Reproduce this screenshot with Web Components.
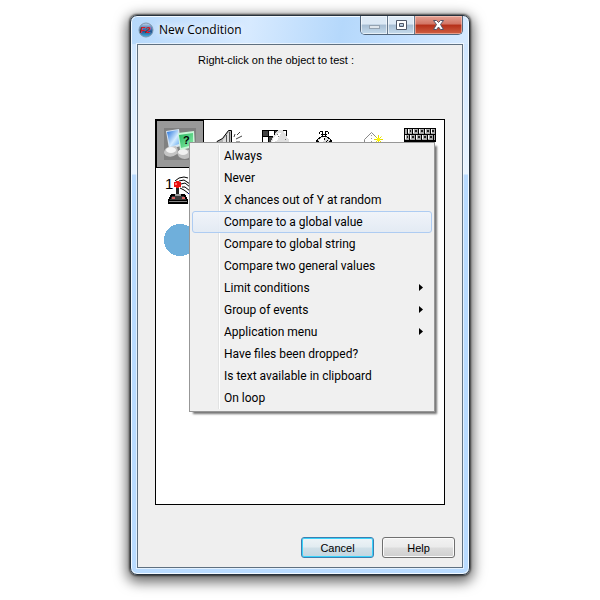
<!DOCTYPE html>
<html lang="en">
<head>
<meta charset="utf-8">
<title>New Condition</title>
<style>
    body {
        box-sizing: border-box;
        min-height: 100vh;
        margin: 0;
        padding: 15px;
        background: #fff;
        color: #000;
        font: 11px/16px "Liberation Sans", Arial, sans-serif;
    }
</style>
</head>
<body>
<win-dialog heading="New Condition">
    <p slot="hint">Right-click on the object to test :</p>
    <object-list>
        <object-cell icon="system" label="Special conditions" selected></object-cell>
        <object-cell icon="speaker" label="Sound"></object-cell>
        <object-cell icon="board" label="Storyboard controls"></object-cell>
        <object-cell icon="timer" label="Timer"></object-cell>
        <object-cell icon="create" label="Create objects"></object-cell>
        <object-cell icon="keyboard" label="Mouse and keyboard"></object-cell>
        <object-cell icon="joystick" label="Player 1"></object-cell>
        <object-cell></object-cell>
        <object-cell></object-cell>
        <object-cell></object-cell>
        <object-cell></object-cell>
        <object-cell></object-cell>
        <object-cell icon="circle" label="Active"></object-cell>
        <context-menu slot="menu">
            <menu-entry>Always</menu-entry>
            <menu-entry>Never</menu-entry>
            <menu-entry>X chances out of Y at random</menu-entry>
            <menu-entry active>Compare to a global value</menu-entry>
            <menu-entry>Compare to global string</menu-entry>
            <menu-entry>Compare two general values</menu-entry>
            <menu-entry submenu>Limit conditions</menu-entry>
            <menu-entry submenu>Group of events</menu-entry>
            <menu-entry submenu>Application menu</menu-entry>
            <menu-entry>Have files been dropped?</menu-entry>
            <menu-entry>Is text available in clipboard</menu-entry>
            <menu-entry>On loop</menu-entry>
        </context-menu>
    </object-list>
    <push-button slot="actions" primary>Cancel</push-button>
    <push-button slot="actions">Help</push-button>
</win-dialog>

<script>
const icons = {
    system: `
        <defs>
            <linearGradient id="blue" x2="1" y2="1"><stop offset="0" stop-color="#1f6fdc"/><stop offset=".6" stop-color="#d5ecff"/><stop offset="1" stop-color="#5fa8ee"/></linearGradient>
            <linearGradient id="green" x2="1" y2="1"><stop offset="0" stop-color="#23b45c"/><stop offset="1" stop-color="#8ff0ac"/></linearGradient>
        </defs>
        <rect width="32" height="32" fill="#808080"/>
        <path d="M2 3 15 1 17 18 5 21Z" fill="#d6e4f2"/>
        <path d="M3 4 14 2 15 16 6 19Z" fill="url(#blue)"/>
        <path d="M0 24Q1 19 6 19L12 18Q15 22 13 26 8 30 3 28 0 27 0 24Z" fill="#c4c4c4"/>
        <ellipse cx="7" cy="22" rx="5" ry="3" fill="#f4f4f4"/>
        <path d="M13 25Q15 21 20 21L26 22Q28 26 26 29 21 33 15 29Z" fill="#c0c0c0"/>
        <ellipse cx="19" cy="24" rx="5" ry="3" fill="#f0f0f0"/>
        <path d="M14 5 30 3 31 19 16 22Z" fill="#c9f7d8"/>
        <path d="M15 7 29 5 29 17 17 20Z" fill="url(#green)"/>
        <text x="19" y="16" font-family="Liberation Sans" font-size="11" font-weight="700">?</text>`,
    speaker: `
        <path d="M5 13.500 10.500 10.500 16.500 2.500H19.500V28.500H16.500L10.500 21.500 5 20.500Z" fill="#b4b4b4" stroke="#000"/>
        <path d="M11 12 17 4V26L11 20Z" fill="#dedede"/>
        <path d="M14.500 7V24M17.500 4V27" stroke="#555"/>
        <path d="M22 9 23 6M25 7 28 4M24 11 30 8M24 14H28" stroke="#444" fill="none"/>`,
    board: `
        <g shape-rendering="crispEdges">
            <rect x="2" y="2" width="25" height="27" fill="#000"/>
            <path d="M9 3h5v5H9zM20 3h6v5H20zM3 9h5v5H3zM15 9h5v5h-5zM9 15h5v5H9zM20 15h6v5h-6zM3 21h5v5H3z" fill="#fff"/>
            <path d="M3 3h5v5H3zM15 3h4v5h-4zM9 9h5v5H9z" fill="#444"/>
            <path d="M10 16 13 9 18 2H23L29 12 26 27H14Z" fill="#e0e0e0"/>
            <path d="M12 14 14 9 18 5H21L17 13Z" fill="#fff"/>
            <path d="M17 6h1v1h-1zM18 8h1v1h-1zM25 11h1v1h-1z" fill="#777"/>
        </g>`,
    timer: `
        <g shape-rendering="crispEdges" fill="none" stroke="#000">
            <circle cx="16" cy="17" r="8.500" fill="#dcdcdc"/>
            <path d="M10 14 13 10 17 9 14 17Z" fill="#fff" stroke="none"/>
            <path d="M12 3h3v1h-3zM17 3h3v1h-3zM11 4h1v2h-1zM20 4h1v2h-1zM13 6h6v1h-6zM14 4h1v4h-1zM17 4h1v4h-1z" fill="#000" stroke="none"/>
            <path d="M16.500 10V12M9 13H11M21 13H23M16.500 22V24M20 12 16 17"/>
        </g>`,
    create: `
        <g fill="none">
            <path d="M8.500 11.500 15.500 4.500 22.500 11.500V20.500L15.500 26.500 8.500 20.500Z" fill="#fff" stroke="#888"/>
            <path d="M15.500 7V25" stroke="#999" stroke-dasharray="1 2"/>
            <path d="M22.500 7V15M18 11.500H27M19.500 8.500 25.500 14.500M25.500 8.500 19.500 14.500" stroke="#e6df00"/>
            <path d="M21 10h3v3h-3z" fill="#fff700"/>
        </g>`,
    keyboard: `
        <g shape-rendering="crispEdges">
            <path d="M0 0H32V14H0Z"/>
            <path d="M1 1h2v5H1zM4 1h4v5H4zM9 1h5v5H9zM15 1h5v5h-5zM21 1h5v5h-5zM27 1h4v5h-4zM1 7h4v5H1zM6 7h5v5H6zM12 7h5v5h-5zM18 7h5v5h-5zM24 7h5v5h-5zM30 7h1v5h-1z" fill="#a9a9a9"/>
            <path d="M4 1h1v4H4zM9 1h1v4H9zM15 1h1v4h-1zM21 1h1v4h-1zM27 1h1v4h-1zM1 7h1v4H1zM6 7h1v4H6zM12 7h1v4h-1zM18 7h1v4h-1zM24 7h1v4h-1z" fill="#fff"/>
            <path d="M6 2h1v2H6zM11 2h2v2h-2zM17 2h2v2h-2zM23 2h2v2h-2zM28 2h2v2h-2zM3 8h1v2H3zM8 8h2v2H8zM14 8h2v2h-2zM20 8h2v2h-2zM26 8h2v2h-2z" fill="#222"/>
        </g>`,
    joystick: `
        <text x="1" y="13" font-family="Liberation Sans" font-size="15">1</text>
        <g>
            <path d="M12 4 16 1 22 1 30 6 31 15 24 16 17 12Z" fill="#fff"/>
            <path d="M11 5 15 2 20 1 24 2M15 5 20 4 26 8M17 8 21 7 26 11M18 11 21 11 26 15M16 12 20 14 24 17" stroke="#000" fill="none"/>
        </g>
        <g shape-rendering="crispEdges">
            <path d="M12 11h3v10h-3z" fill="#222"/>
            <path d="M12 5h3v1h2v5h-2v1h-3v-1h-2V6h2z" fill="#e81010"/>
            <path d="M11 7h2v2h-2z" fill="#ff7474"/>
            <path d="M7 18H21L24 24V28H4V24Z"/>
            <path d="M8 20H20L22 24H6Z" fill="#3c3c3c"/>
            <path d="M11 18H17V20H11Z" fill="#999"/>
            <path d="M5 25H23V26H5Z" fill="#888"/>
            <path d="M8 21h3v2H8zM18 21h3v2h-3z" fill="#d86060"/>
            <path d="M24 17H31" stroke="#0000a0"/>
        </g>`,
    circle: `<circle cx="16" cy="16" r="16" fill="#6fafdb" shape-rendering="crispEdges"/>`
};

class WinDialog extends HTMLElement {
    constructor() {
        super();
        this.attachShadow({ mode: "open" });
        this.render();
    }

    render() {
        this.shadowRoot.innerHTML = `
            <style>
                :host {
                    display: block;
                    box-sizing: border-box;
                    max-width: 340px;
                    margin: 0 auto;
                    padding: 0 6px 6px;
                    border: 1px solid #26323e;
                    border-radius: 7px;
                    background:
                        linear-gradient(100deg, #b5d8fb 0%, #d7eaff 35%, #b5d8fb 62%, #c3e0ff 80%, #d6eaff 100%) top / 100% 28px no-repeat,
                        linear-gradient(#cfe6ff 28px, #e9f4ff 158px, #b9dbff 159px);
                    box-shadow:
                        inset 0 0 0 1px #f2f9ff,
                        0 0 2px 1px rgba(0, 0, 0, .6),
                        0 4px 13px 3px rgba(0, 0, 0, .6);
                }

                header {
                    display: flex;
                    align-items: flex-start;
                    height: 28px;
                }

                header > svg {
                    margin: 6px 5px 0 1px;
                }

                h1 {
                    flex: 1;
                    margin: 0;
                    font: 12px/28px "Open Sans", "Segoe UI", sans-serif;
                    text-shadow: 0 0 8px #fff, 0 0 8px #fff;
                }

                .caption {
                    display: flex;
                    border: 1px solid #52667c;
                    border-top: 0;
                    border-radius: 0 0 5px 5px;
                    overflow: hidden;
                }

                .caption button {
                    display: grid;
                    place-items: center;
                    width: 27px;
                    height: 18px;
                    padding: 0;
                    border: 0;
                    border-right: 1px solid #65788c;
                    background: linear-gradient(#dce9f5 45%, #a6bdd3 50%, #c6dced);
                    box-shadow: inset 0 0 0 1px rgba(255, 255, 255, .6);
                }

                .caption .close {
                    width: 47px;
                    border-right: 0;
                    background: linear-gradient(#e5a294, #d27464 45%, #b52f19 50%, #cf6043);
                    box-shadow: inset 0 0 0 1px rgba(255, 220, 210, .5);
                }

                main {
                    display: flex;
                    flex-direction: column;
                    border: 1px solid #5f7080;
                    background: #efefef;
                    box-shadow: 0 0 0 1px rgba(255, 255, 255, .6);
                }

                .hint {
                    min-height: 74px;
                    text-align: center;
                }

                ::slotted(p) {
                    margin: 7px 0 0;
                    padding-right: 48px;
                    text-align: center;
                }

                .body {
                    padding: 0 17px;
                }

                footer {
                    display: flex;
                    justify-content: flex-end;
                    gap: 8px;
                    padding: 32px 7px 9px;
                }
            </style>

            <header>
                <svg width="16" height="16" viewBox="0 0 16 16" aria-hidden="true">
                    <defs>
                        <linearGradient id="ball" x2="0" y2="1"><stop offset="0" stop-color="#c9daec"/><stop offset=".3" stop-color="#5f8cc0"/><stop offset=".6" stop-color="#1f5590"/><stop offset="1" stop-color="#48b5e4"/></linearGradient>
                    </defs>
                    <circle cx="8" cy="8" r="7" fill="url(#ball)" stroke="#7d93ac"/>
                    <text x="2" y="11" font-family="Liberation Sans" font-size="9" font-weight="700" font-style="italic" fill="#d81a20">F2</text>
                </svg>
                <h1></h1>
                <div class="caption">
                    <button aria-label="Minimize">
                        <svg width="13" height="12"><rect x="1.5" y="6.5" width="10" height="3" fill="#dfe6ec" stroke="#94a3b1"/></svg>
                    </button>
                    <button aria-label="Maximize">
                        <svg width="13" height="12"><path d="M1.500 1.500H11.500V10.500H1.500ZM4.500 4.500V7.500H8.500V4.500Z" fill="#fff" stroke="#4f5868" fill-rule="evenodd"/></svg>
                    </button>
                    <button class="close" aria-label="Close">
                        <svg width="13" height="12"><path d="M1.500 1.500H4.500L6.500 3.500 8.500 1.500H11.500L8.500 5.500 11.500 10.500H8.500L6.500 8 4.500 10.500H1.500L4.500 5.500Z" fill="#fff" stroke="#555366"/></svg>
                    </button>
                </div>
            </header>
            <main>
                <div class="hint"><slot name="hint"></slot></div>
                <div class="body"><slot></slot></div>
                <footer><slot name="actions"></slot></footer>
            </main>
        `;
        this.shadowRoot.querySelector("h1").textContent = this.getAttribute("heading");
    }
}

class ObjectList extends HTMLElement {
    constructor() {
        super();
        this.attachShadow({ mode: "open" });
        this.render();
    }

    render() {
        this.shadowRoot.innerHTML = `
            <style>
                :host {
                    display: block;
                    position: relative;
                    border: 1px solid #000;
                    background: #fff;
                }

                .grid {
                    display: grid;
                    grid-template-columns: repeat(auto-fill, 48px);
                    grid-auto-rows: 48px;
                    align-content: start;
                    min-height: 384px;
                }

                /* opened where the first object was clicked */
                ::slotted(context-menu) {
                    position: absolute;
                    top: 22px;
                    left: 33px;
                }
            </style>

            <div class="grid"><slot></slot></div>
            <slot name="menu"></slot>
        `;
    }
}

class ObjectCell extends HTMLElement {
    constructor() {
        super();
        this.attachShadow({ mode: "open" });
        this.render();
    }

    render() {
        const icon = this.getAttribute("icon");

        this.shadowRoot.innerHTML = `
            <style>
                :host {
                    display: block;
                }

                button {
                    display: block;
                    box-sizing: border-box;
                    width: 100%;
                    height: 100%;
                    padding: 7px;
                    border: 1px solid transparent;
                    background: none;
                }

                :host([selected]) button {
                    border-color: #000;
                    background: #999;
                }

                svg {
                    display: block;
                }
            </style>
        `;

        if (icon) {
            this.shadowRoot.innerHTML += `
                <button aria-label="${this.getAttribute("label")}">
                    <svg width="32" height="32" viewBox="0 0 32 32">${icons[icon]}</svg>
                </button>
            `;
        }
    }
}

class ContextMenu extends HTMLElement {
    constructor() {
        super();
        this.attachShadow({ mode: "open" });
        this.render();
    }

    render() {
        this.shadowRoot.innerHTML = `
            <style>
                :host {
                    display: block;
                    box-sizing: border-box;
                    width: 246px;
                    padding: 2px;
                    border: 1px solid #979797;
                    background:
                        linear-gradient(90deg, #e2e3e3 1px, #fff 1px) 28px 2px / 2px calc(100% - 4px) no-repeat,
                        #f0f0f0;
                    box-shadow: 3px 3px 2px -1px rgba(0, 0, 0, .55);
                }
            </style>

            <div role="menu"><slot></slot></div>
        `;
    }
}

class MenuEntry extends HTMLElement {
    constructor() {
        super();
        this.attachShadow({ mode: "open" });
        this.render();
    }

    render() {
        this.shadowRoot.innerHTML = `
            <style>
                :host {
                    display: block;
                }

                button {
                    display: flex;
                    align-items: center;
                    justify-content: space-between;
                    box-sizing: border-box;
                    width: 100%;
                    height: 22px;
                    padding: 0 8px 0 31px;
                    border: 1px solid transparent;
                    border-radius: 3px;
                    background: none;
                    color: inherit;
                    font: 12px/20px Roboto, "Segoe UI", sans-serif;
                    text-align: left;
                    white-space: nowrap;
                }

                :host([active]) button {
                    border-color: #aeccf2;
                    background: linear-gradient(rgba(240, 244, 250, .9), rgba(226, 234, 244, .9));
                }

                svg {
                    display: none;
                }

                :host([submenu]) svg {
                    display: block;
                }
            </style>

            <button role="menuitem">
                <span><slot></slot></span>
                <svg width="4" height="8"><path d="M0 0 4 3.500 0 7Z"/></svg>
            </button>
        `;
    }
}

class PushButton extends HTMLElement {
    constructor() {
        super();
        this.attachShadow({ mode: "open" });
        this.render();
    }

    render() {
        this.shadowRoot.innerHTML = `
            <style>
                :host {
                    display: block;
                }

                button {
                    display: block;
                    box-sizing: border-box;
                    width: 73px;
                    height: 21px;
                    padding: 0;
                    border: 1px solid #707070;
                    border-radius: 3px;
                    background: linear-gradient(#f2f2f2, #ebebeb 48%, #dcdcdc 52%, #cfcfcf);
                    box-shadow: inset 0 0 0 1px #fbfbfb;
                    color: inherit;
                    font: inherit;
                }

                :host([primary]) button {
                    border-color: #3c7fb1;
                    background: linear-gradient(#eef4f7, #e2ecf1 48%, #d0e0e8 52%, #c2d6e0);
                    box-shadow: inset 0 0 0 1px #3ad3fb;
                }
            </style>

            <button><slot></slot></button>
        `;
    }
}

customElements.define("win-dialog", WinDialog);
customElements.define("object-list", ObjectList);
customElements.define("object-cell", ObjectCell);
customElements.define("context-menu", ContextMenu);
customElements.define("menu-entry", MenuEntry);
customElements.define("push-button", PushButton);
</script>
</body>
</html>
